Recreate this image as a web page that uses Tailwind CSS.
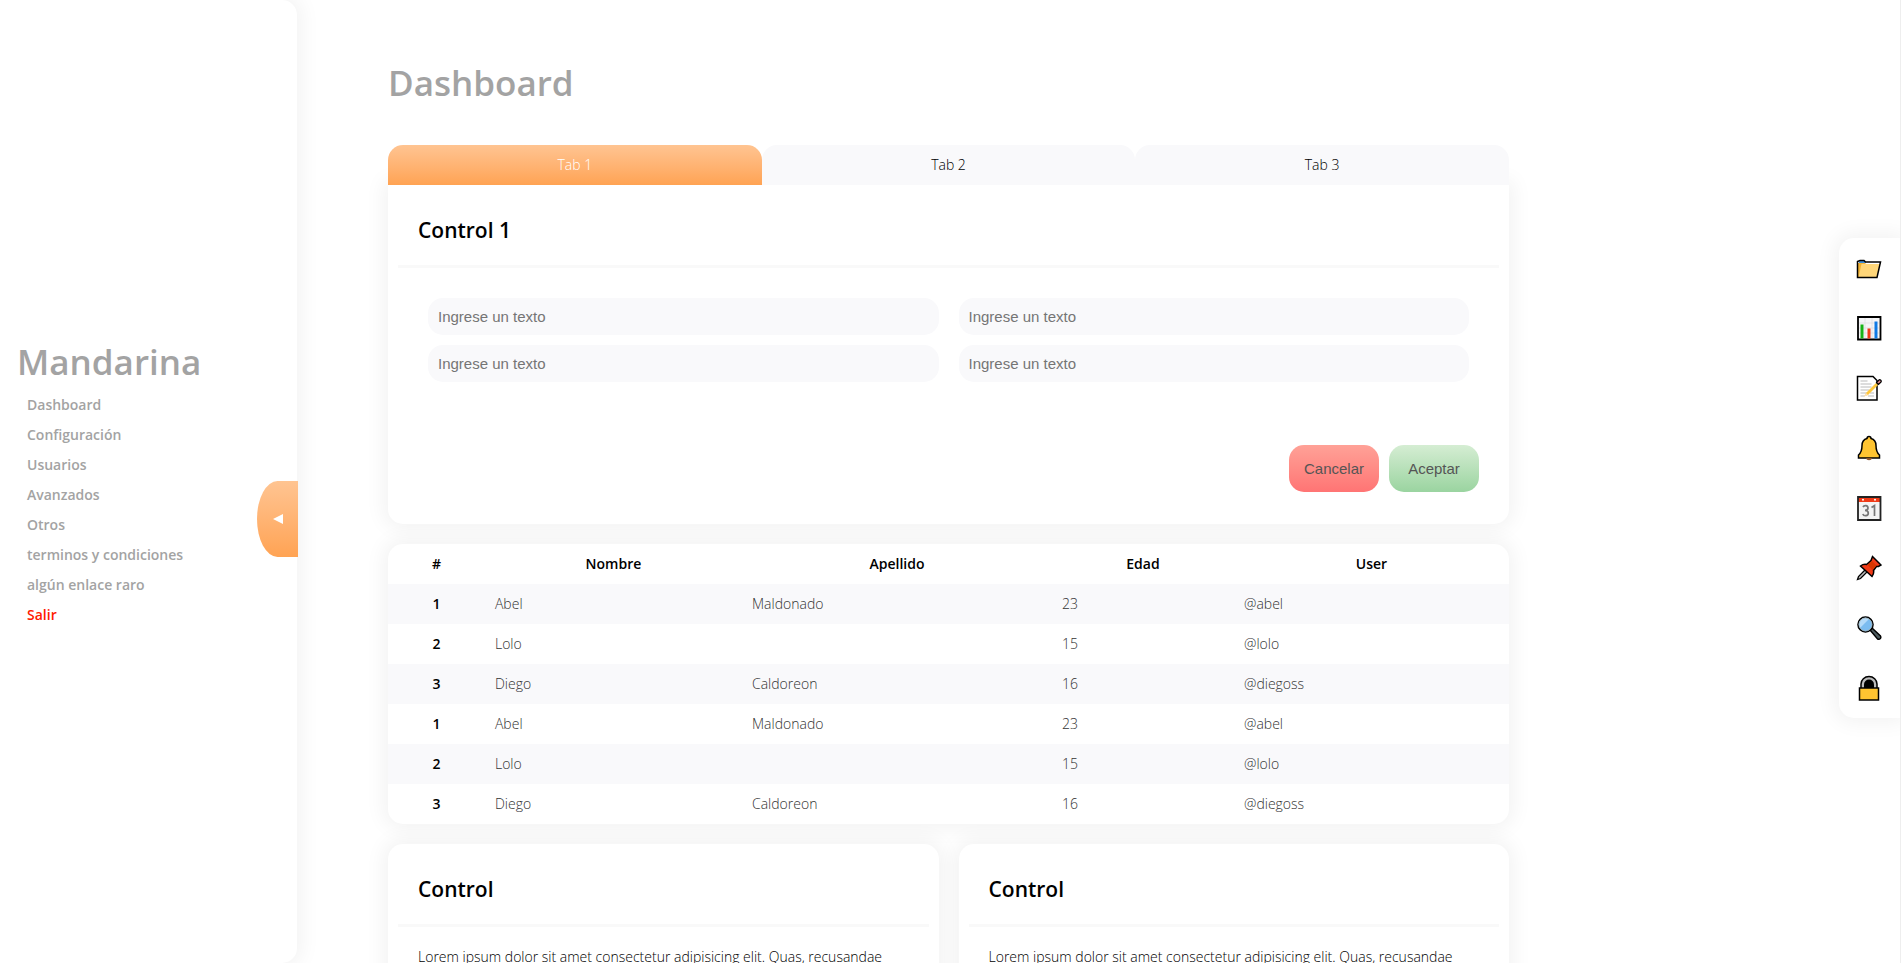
<!DOCTYPE html>
<html lang="es">
<head>
<meta charset="utf-8">
<meta name="viewport" content="width=device-width, initial-scale=1">
<title>Mandarina</title>
<script src="https://cdn.jsdelivr.net/npm/@tailwindcss/browser@4"></script>
</head>
<body class="flex h-screen overflow-hidden border-r border-[#eeeeee] bg-white font-['Open_Sans','Noto_Sans',sans-serif] text-sm font-light text-black">

<aside class="relative z-10 flex w-[297px] shrink-0 flex-col justify-center rounded-r-[15px] bg-white px-[17px] shadow-[0_0_20px_5px_rgba(0,0,0,0.05)]">
  <h2 class="text-[35px] leading-[56px] font-semibold text-[#a3a3a3]">Mandarina</h2>
  <nav class="flex flex-col pl-[10px] leading-[30px] font-semibold text-[#a3a3a3]">
    <a href="#">Dashboard</a>
    <a href="#">Configuración</a>
    <a href="#">Usuarios</a>
    <a href="#">Avanzados</a>
    <a href="#">Otros</a>
    <a href="#">terminos y condiciones</a>
    <a href="#">algún enlace raro</a>
    <a href="#" class="text-[#ff1a00]">Salir</a>
  </nav>
  <button type="button" aria-label="Ocultar menú" class="absolute top-1/2 -right-px -mt-px flex h-[76px] w-[41px] items-center justify-center rounded-l-[50%] bg-linear-to-b from-[#ffc491] to-[#ffa353]">
    <svg class="h-[10px] w-[10px]" viewBox="0 0 10 10" fill="#fff"><path d="M0 5 10 0v10z"/></svg>
  </button>
</aside>

<main class="min-w-0 flex-1 overflow-y-auto pt-[56px] pr-[330px] pl-[91px] [scrollbar-width:none]">
  <h1 class="text-[35px] leading-[54px] font-semibold text-[#a3a3a3]">Dashboard</h1>

  <div class="mt-[35px]">
    <div class="relative z-1 grid grid-cols-3" role="tablist">
      <button type="button" role="tab" aria-selected="true" class="h-10 rounded-t-[15px] bg-linear-to-b from-[#ffc491] to-[#ffa353] text-white">Tab 1</button>
      <button type="button" role="tab" aria-selected="false" class="h-10 rounded-t-[15px] bg-[#f9f9fb]">Tab 2</button>
      <button type="button" role="tab" aria-selected="false" class="h-10 rounded-t-[15px] bg-[#f9f9fb]">Tab 3</button>
    </div>
    <section class="rounded-b-[15px] bg-white px-[10px] pb-8 shadow-[0_0_20px_5px_rgba(0,0,0,0.05)]">
      <h3 class="h-[83px] border-b-3 border-[#f9f9f9] px-5 pt-[29px] text-[21px] leading-8 font-semibold">Control 1</h3>
      <form class="px-5 pt-[30px]">
        <div class="grid grid-cols-2 gap-x-5 gap-y-[10px] px-[10px] font-['Liberation_Sans',sans-serif] text-[15px] font-normal">
          <input type="text" aria-label="Texto 1" placeholder="Ingrese un texto" class="h-[37px] w-full rounded-[15px] bg-[#f9f9fb] px-[10px] placeholder:text-[#757575]">
          <input type="text" aria-label="Texto 2" placeholder="Ingrese un texto" class="h-[37px] w-full rounded-[15px] bg-[#f9f9fb] px-[10px] placeholder:text-[#757575]">
          <input type="text" aria-label="Texto 3" placeholder="Ingrese un texto" class="h-[37px] w-full rounded-[15px] bg-[#f9f9fb] px-[10px] placeholder:text-[#757575]">
          <input type="text" aria-label="Texto 4" placeholder="Ingrese un texto" class="h-[37px] w-full rounded-[15px] bg-[#f9f9fb] px-[10px] placeholder:text-[#757575]">
        </div>
        <div class="mt-[63px] flex justify-end gap-[10px] font-['Liberation_Sans',sans-serif] text-[15px] font-normal text-[#555555]">
          <button type="button" class="h-[47px] w-[90px] rounded-[15px] bg-linear-to-b from-[#ffa197] to-[#ff7474]">Cancelar</button>
          <button type="submit" class="h-[47px] w-[90px] rounded-[15px] bg-linear-to-b from-[#d5edd3] to-[#9ad4a0]">Aceptar</button>
        </div>
      </form>
    </section>
  </div>

  <div class="mt-5 overflow-hidden rounded-[15px] bg-white shadow-[0_0_20px_5px_rgba(0,0,0,0.05)]">
    <table class="w-full table-fixed text-[#333333] [&_td]:px-[10px] [&_th]:font-semibold [&_th]:text-black [&_tr]:h-10">
      <thead>
        <tr><th class="w-[8.65%]">#</th><th class="w-[22.93%]">Nombre</th><th class="w-[27.65%]">Apellido</th><th class="w-[16.24%]">Edad</th><th>User</th></tr>
      </thead>
      <tbody class="[&>tr:nth-child(odd)]:bg-[#f9f9fb]">
        <tr><th>1</th><td>Abel</td><td>Maldonado</td><td>23</td><td>@abel</td></tr>
        <tr><th>2</th><td>Lolo</td><td></td><td>15</td><td>@lolo</td></tr>
        <tr><th>3</th><td>Diego</td><td>Caldoreon</td><td>16</td><td>@diegoss</td></tr>
        <tr><th>1</th><td>Abel</td><td>Maldonado</td><td>23</td><td>@abel</td></tr>
        <tr><th>2</th><td>Lolo</td><td></td><td>15</td><td>@lolo</td></tr>
        <tr><th>3</th><td>Diego</td><td>Caldoreon</td><td>16</td><td>@diegoss</td></tr>
      </tbody>
    </table>
  </div>

  <div class="mt-5 grid grid-cols-2 gap-5">
    <section class="rounded-[15px] bg-white px-[10px] pb-8 shadow-[0_0_20px_5px_rgba(0,0,0,0.05)]">
      <h3 class="h-[83px] border-b-3 border-[#f9f9f9] px-5 pt-[29px] text-[21px] leading-8 font-semibold">Control</h3>
      <p class="px-5 pt-5">Lorem ipsum dolor sit amet consectetur adipisicing elit. Quas, recusandae</p>
    </section>
    <section class="rounded-[15px] bg-white px-[10px] pb-8 shadow-[0_0_20px_5px_rgba(0,0,0,0.05)]">
      <h3 class="h-[83px] border-b-3 border-[#f9f9f9] px-5 pt-[29px] text-[21px] leading-8 font-semibold">Control</h3>
      <p class="px-5 pt-5">Lorem ipsum dolor sit amet consectetur adipisicing elit. Quas, recusandae</p>
    </section>
  </div>
</main>

<aside class="z-10 mt-[238px] w-[61px] shrink-0 self-start rounded-l-[15px] bg-white shadow-[0_0_20px_5px_rgba(0,0,0,0.05)]">
  <div class="flex flex-col pr-px [&>button]:flex [&>button]:h-[60px] [&>button]:items-center [&>button]:justify-center [&_svg]:h-[26px] [&_svg]:w-[26px]">
    <button type="button" aria-label="Carpeta">
      <svg viewBox="0 0 26 26"><path d="M3 7 4 5.500 7 5l2 1 1 2H3z" fill="#3d8fdb"/><path d="M2 8h7l1 1h12v3l-3 11H2z" fill="#f2b233"/><path d="M5.500 9H24L20.500 22.500H2.500z" fill="#ffd679"/><path d="M1.500 22.500V6.500L4 5.500h4l1.500 1.500h15L21 22.500z" fill="none" stroke="#000" stroke-width="1.500"/></svg>
    </button>
    <button type="button" aria-label="Gráficas">
      <svg viewBox="0 0 26 26"><path d="M2 2h22.500v22.500H2z" fill="#f5f5f7" stroke="#000" stroke-width="1.800"/><path d="M3 8h20M3 13h20M3 18h20M9 3v20M16 3v20" stroke="#ddd" stroke-width=".7"/><path d="M4.500 9.500h3v14h-3z" fill="#16b316"/><path d="M11.500 13.500h3v10h-3z" fill="#f03a17"/><path d="M18.500 6.500h3v17h-3z" fill="#0f7ae5"/></svg>
    </button>
    <button type="button" aria-label="Notas">
      <svg viewBox="0 0 26 26"><path d="M1.500 1.500H17l4 4V25H1.500z" fill="#fff" stroke="#000" stroke-width="1.500"/><path d="M4.500 6h7M4.500 9h11M4.500 12h11M4.500 15h9M4.500 18h7M4.500 21h4M14 18h4M12 21h6" stroke="#bbb"/><path d="m8 21.500 2-3.500L20 8l2 2-10 10z" fill="#ffc83d"/><path d="m8 21.500 2-3.500 2 2z" fill="#fbe0c0"/><path d="m20.500 7.500 2.500-2.500c1-1 3 1 2 2l-2.500 2.500z" fill="#e38b93" stroke="#000" stroke-width="1.200"/></svg>
    </button>
    <button type="button" aria-label="Notificaciones">
      <svg viewBox="0 0 26 26"><path d="M13 1.500c-1.500 0-2 1-2 2-3.500 1-5 4-5 7 0 4-.5 7-3.500 9.500V23h21v-3C20.500 17.500 20 14.500 20 10.500c0-3-1.500-6-5-7 0-1-.5-2-2-2z" fill="#ffc431" stroke="#000" stroke-width="1.500"/><path d="M10 23h6c-.5 3-5.500 3-6 0" fill="#8d562e"/></svg>
    </button>
    <button type="button" aria-label="Calendario">
      <svg viewBox="0 0 26 26"><path d="M2 2h22.500v23H2z" fill="#f3f3f3"/><path d="M2 2h22.500v5H2z" fill="#f03a17"/><path d="M2 2h22.500v23H2z" fill="none" stroke="#222" stroke-width="1.800"/><circle cx="7" cy="4.800" r="1" fill="#fff"/><circle cx="19" cy="4.800" r="1" fill="#fff"/><path d="M7 12c1-2 5-2 5 1 0 1.500-1.500 2.300-3 2.300 1.700 0 3.300.7 3.300 2.700 0 3.300-4.500 3.500-5.500 1M15.500 12.500l3-2V21" fill="none" stroke="#777" stroke-width="1.700"/></svg>
    </button>
    <button type="button" aria-label="Fijar">
      <svg viewBox="0 0 26 26"><path d="m1.500 24.500 1-3L10 14l2 2-7.500 7.500z" fill="#bbb" stroke="#000" stroke-width="1.300"/><path d="M16.500 1.500 25 10l-2.500 1.500-2 0-3 4c.5 2 0 4-1.500 6L4.500 11c2-1.500 3.500-2 6-1.500l4.500-4z" fill="#f03a17" stroke="#000" stroke-width="1.500"/><path d="m16 6 4.500 4.500-4 4.500-5-5z" fill="#d63600"/></svg>
    </button>
    <button type="button" aria-label="Buscar">
      <svg viewBox="0 0 26 26"><path d="m14 15 2-2 8.500 8c1 2-.5 4-3 3z" fill="#4d5b5e" stroke="#000" stroke-width="1.400"/><circle cx="9.500" cy="9.500" r="7.500" fill="#7cbcf0" stroke="#000" stroke-width="1.600"/><path d="M4 13A6.500 6.500 0 0 1 13 4z" fill="#b5dbfa"/><circle cx="9.500" cy="9.500" r="6.500" fill="none" stroke="#9eb0b5" stroke-width=".8"/></svg>
    </button>
    <button type="button" aria-label="Bloquear">
      <svg viewBox="0 0 26 26"><path d="M5 14V9a8 7.500 0 0 1 16 0v5z" fill="#bbb" stroke="#000" stroke-width="1.500"/><path d="M8 14V9.500a5 5 0 0 1 10 0V14z" fill="#000"/><path d="M3.500 13h19v12h-19z" fill="#ffc431" stroke="#000" stroke-width="1.500"/></svg>
    </button>
  </div>
</aside>
</body>
</html>
